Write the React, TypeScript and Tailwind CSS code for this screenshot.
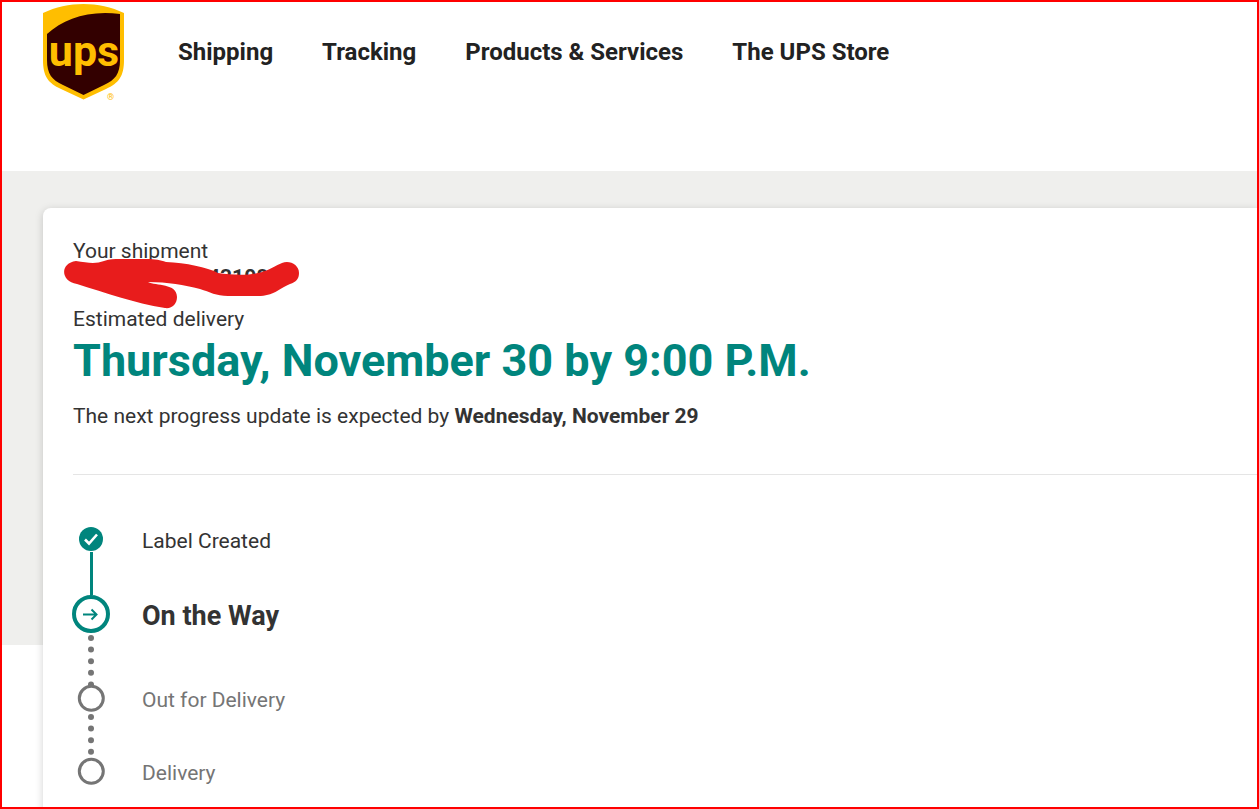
import { ReactNode } from 'react';

const NAV_LINKS = ['Shipping', 'Tracking', 'Products & Services', 'The UPS Store'];

function Logo() {
  return (
    <svg viewBox="0 0 84 104" className="h-[104px] w-[84px]" role="img" aria-label="UPS">
      <path
        d="M1 11C26-1 57-1 82 11V58C82 74 77 81 64 87L41.500 97.500L19 87C6 81 1 74 1 58Z"
        fill="#ffbe00"
      />
      <path
        d="M5 32C22 17 46 8 78 12V58C78 72 73 78 62 83L41.500 93L21 83C10 78 5 72 5 58Z"
        fill="#330000"
      />
      <text x="42" y="64" textAnchor="middle" fill="#ffbe00" fontSize="43" fontWeight="700" fontFamily="Roboto, sans-serif">
        ups
      </text>
      <text x="65" y="98" fill="#ffbe00" fontSize="9" fontFamily="Roboto, sans-serif">®</text>
    </svg>
  );
}

function DoneIcon() {
  return (
    <svg viewBox="0 0 24 24" className="h-6 w-6 shrink-0" aria-hidden="true">
      <circle cx="12" cy="12" r="12" fill="#00857d" />
      <path d="M6 12.5l4 4 8-9" fill="none" stroke="#fff" strokeWidth="2.6" />
    </svg>
  );
}

function CurrentIcon() {
  return (
    <svg viewBox="0 0 38 38" className="h-[38px] w-[38px] shrink-0" aria-hidden="true">
      <circle cx="19" cy="19" r="17" fill="#fff" stroke="#00857d" strokeWidth="4" />
      <path d="M11 19.500H25M19.500 14.500l5 5-5 5" fill="none" stroke="#00857d" strokeWidth="2" />
    </svg>
  );
}

function PendingIcon() {
  return (
    <svg viewBox="0 0 28 28" className="h-7 w-7 shrink-0" aria-hidden="true">
      <circle cx="14.300" cy="14.300" r="12" fill="#fff" stroke="#757575" strokeWidth="3" />
    </svg>
  );
}

function Dots({ count }: { count: number }) {
  return (
    <svg viewBox={`0 0 6 ${count * 12}`} width="6" height={count * 12} className="mt-0.5 shrink-0" aria-hidden="true">
      {Array.from({ length: count }, (_, i) => (
        <circle key={i} cx="3" cy={3 + i * 11.6} r="3" fill="#757575" />
      ))}
    </svg>
  );
}

function Step({ icon, connector, className, children }: {
  icon: ReactNode;
  connector?: ReactNode;
  className: string;
  children: ReactNode;
}) {
  return (
    <li className={`flex gap-8 ${className}`}>
      <span className="flex w-[38px] shrink-0 flex-col items-center">
        {icon}
        {connector}
      </span>
      {children}
    </li>
  );
}

// marker strokes drawn over the tracking number
function Scribble() {
  return (
    <svg viewBox="0 0 236 52" className="absolute -left-[9px] -top-1.5 h-[52px] w-[236px]" aria-hidden="true">
      <path
        d="M12 2C24 4 32 5 40 2C46 0 50 0 56 0H82C92 0 96 1 102 3C122 4 143 8 154 14C168 16 186 17 198 13C206 11 212 6 218 4C226 1 235 6 235 14C235 20 232 23 226 25C214 30 210 37 194 37H164C152 37 146 33 136 30C120 26 104 23 84 23C92 27 113 24 113 38C113 45 108 50 101 49C70 44 42 34 13 25C-4 22-4 4 12 2Z"
        fill="#e81c1c"
      />
    </svg>
  );
}

export default function App() {
  return (
    <div className="h-screen overflow-hidden border-2 border-[#ff0000] bg-white font-['Roboto',sans-serif] text-[#333]">
      <header className="flex h-[169px] items-start pl-10">
        <a href="#">
          <Logo />
        </a>
        <nav className="flex gap-[49px] pl-[52px] pt-8 text-2xl font-bold text-[#222]">
          {NAV_LINKS.map((label) => (
            <a key={label} href="#" className="leading-9">{label}</a>
          ))}
        </nav>
      </header>

      <main className="bg-[linear-gradient(#efefed_474px,#fff_474px)] pl-[41px] pt-[37px]">
        <section className="rounded-l-lg bg-white pb-8 pl-[30px] pt-[29px] text-[21px] leading-7 shadow-[0_2px_8px_rgba(0,0,0,0.18)]">
          <p>Your shipment</p>
          <div className="relative h-10">
            <p className="pl-[135px] font-bold leading-6">43108</p>
            <Scribble />
          </div>
          <p>Estimated delivery</p>
          <h1 className="text-[45px] font-bold leading-[56px] text-[#00857d]">
            Thursday, November 30 by 9:00 P.M.
          </h1>
          <p className="pt-[13px]">
            The next progress update is expected by <strong>Wednesday, November 29</strong>
          </p>

          <hr className="mt-11 border-[#e5e5e5]" />

          <ol className="-ml-px pt-[52px]">
            <Step className="h-[68px]" icon={<DoneIcon />} connector={<span className="mt-px w-[3px] grow bg-[#00857d]" />}>
              <p>Label Created</p>
            </Step>
            <Step className="h-[89px]" icon={<CurrentIcon />} connector={<Dots count={5} />}>
              <h2 className="text-[27px] font-bold leading-[42px]">On the Way</h2>
            </Step>
            <Step className="h-[73px] text-[#757575]" icon={<PendingIcon />} connector={<Dots count={4} />}>
              <p className="leading-8">Out for Delivery</p>
            </Step>
            <Step className="text-[#757575]" icon={<PendingIcon />}>
              <p className="leading-8">Delivery</p>
            </Step>
          </ol>
        </section>
      </main>
    </div>
  );
}
